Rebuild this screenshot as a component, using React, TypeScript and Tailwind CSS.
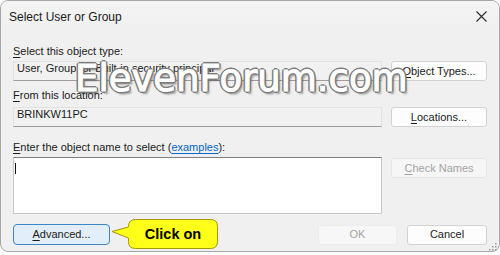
import React from "react";

const Mn = ({ c }: { c: string }) => (
  <span className="underline underline-offset-[2px] decoration-[1px]">{c}</span>
);

const Btn = ({ children, disabled }: { children: React.ReactNode; disabled?: boolean }) => (
  <div
    className={
      "w-[96px] h-[20px] rounded-[3px] border flex items-center justify-center text-[11px] leading-[13px] " +
      (disabled
        ? "border-[#e6e6e6] bg-[#f6f6f6] text-[#a3a3a3]"
        : "border-[#d3d3d3] bg-[#fdfdfd] text-[#1b1b1b]")
    }
  >
    {children}
  </div>
);

const App = () => {
  return (
    <div className="relative w-[500px] h-[255px] bg-white overflow-hidden font-['Liberation_Sans',Arial,sans-serif]">
      <div className="w-[500px] h-[252px] rounded-[8px] border border-[#a7a7a7] bg-[#f0f0f0] overflow-hidden">
        {/* title bar */}
        <div className="h-[29px] pl-[8px] pr-[12px] pt-[9px] flex items-start justify-between bg-gradient-to-b from-[#f4f4f4] to-[#f0f0f0]">
          <div className="text-[12px] leading-[14px] text-[#1a1a1a]">Select User or Group</div>
          <svg width="11" height="11" viewBox="0 0 11 11" className="mt-[1px]">
            <path d="M0.5 0.5 L10.5 10.5 M10.5 0.5 L0.5 10.5" stroke="#2b2b2b" strokeWidth="1.1" />
          </svg>
        </div>

        {/* body */}
        <div className="px-[12px] pt-[15px] text-[11px] leading-[13px] text-[#1b1b1b]">
          <div>
            <Mn c="S" />elect this object type:
          </div>
          <div className="mt-[3px] flex items-start gap-[9px]">
            <div className="w-[369px] h-[20px] border border-[#e2e2e2] border-b-[#9d9d9d] bg-[#f1f1f1] pl-[3px] whitespace-nowrap overflow-hidden">
              User, Group, or Built-in security principal
            </div>
            <Btn>
              <Mn c="O" />bject Types...
            </Btn>
          </div>

          <div className="mt-[8px]">
            <Mn c="F" />rom this location:
          </div>
          <div className="mt-[5px] flex items-start gap-[9px]">
            <div className="w-[369px] h-[20px] border border-[#e2e2e2] border-b-[#9d9d9d] bg-[#f1f1f1] pl-[3px] whitespace-nowrap">
              BRINKW11PC
            </div>
            <Btn>
              <Mn c="L" />ocations...
            </Btn>
          </div>

          <div className="mt-[14px]">
            <Mn c="E" />nter the object name to select (
            <span className="text-[#0066cc] underline underline-offset-[2px]">examples</span>):
          </div>
          <div className="mt-[3px] flex items-start gap-[9px]">
            <div className="w-[369px] h-[57px] border border-[#c9c9c9] border-t-[#7f7f7f] bg-white pl-[1px] pt-[5px]">
              <div className="w-[1px] h-[11px] bg-[#111]" />
            </div>
            <div className="mt-[1px]">
              <Btn disabled>
                <Mn c="C" />heck Names
              </Btn>
            </div>
          </div>

          <div className="mt-[10px] flex items-center">
            <div className="w-[97px] h-[21px] rounded-[4px] border border-[#3d86c8] bg-[#e2eef9] flex items-center justify-center">
              <Mn c="A" />dvanced...
            </div>
            <div className="ml-auto flex items-center gap-[10px]">
              <div className="w-[79px] h-[20px] rounded-[3px] border border-[#ececec] bg-[#f7f7f7] text-[#a3a3a3] flex items-center justify-center">
                OK
              </div>
              <div className="w-[80px] h-[20px] rounded-[3px] border border-[#d3d3d3] bg-[#fdfdfd] flex items-center justify-center">
                Cancel
              </div>
            </div>
          </div>
        </div>
      </div>

      {/* resize grip */}
      <svg className="absolute left-[488px] top-[242px]" width="10" height="10" viewBox="0 0 10 10">
        <g fill="#9a9a9a">
          <rect x="7" y="1" width="1.5" height="1.5" />
          <rect x="4" y="4" width="1.5" height="1.5" />
          <rect x="7" y="4" width="1.5" height="1.5" />
          <rect x="1" y="7" width="1.5" height="1.5" />
          <rect x="4" y="7" width="1.5" height="1.5" />
          <rect x="7" y="7" width="1.5" height="1.5" />
        </g>
      </svg>

      {/* watermark */}
      <div className="absolute left-[75px] top-[59px] font-['DejaVu_Sans',sans-serif] text-[37px] leading-[40px] text-white whitespace-nowrap [-webkit-text-stroke:1px_#ffffff] [text-shadow:2px_0_0_#7c7c7c,-2px_0_0_#7c7c7c,0_2px_0_#7c7c7c,0_-2px_0_#7c7c7c,1.4px_1.4px_0_#7c7c7c,-1.4px_-1.4px_0_#7c7c7c,1.4px_-1.4px_0_#7c7c7c,-1.4px_1.4px_0_#7c7c7c,2.5px_2.5px_2px_rgba(0,0,0,0.35)]">
        ElevenForum.com
      </div>

      {/* callout */}
      <svg className="absolute left-0 top-0" width="500" height="255" viewBox="0 0 500 255">
        <path
          d="M135.5 219.5 H210.5 Q217.5 219.5 217.5 226.5 V241.5 Q217.5 248.5 210.5 248.5 H135.5 Q128.5 248.5 128.5 241.5 V238 L112 231.5 L128.5 227 V226.5 Q128.5 219.5 135.5 219.5 Z"
          fill="#ffff1a"
          stroke="#a69600"
          strokeWidth="1"
        />
      </svg>
      <div className="absolute left-[128px] top-[226px] w-[90px] text-center text-[14.5px] leading-[16px] font-bold text-black">
        Click on
      </div>
    </div>
  );
};

export default App;
